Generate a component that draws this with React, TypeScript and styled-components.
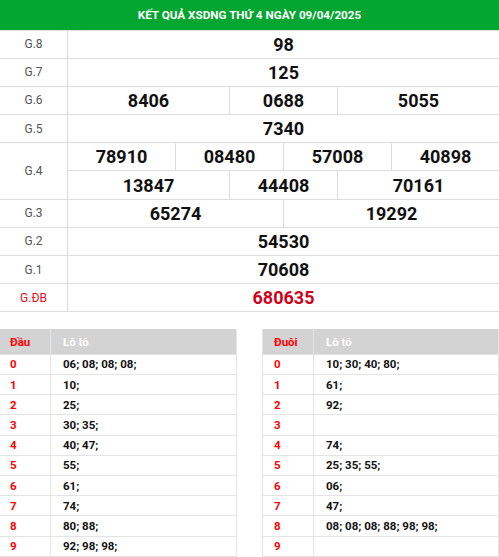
import React from "react";
import styled, { createGlobalStyle } from "styled-components";

const Global = createGlobalStyle`
  html, body { margin: 0; padding: 0; background: #fff; }
  body { font-family: Roboto, "Liberation Sans", Arial, sans-serif; }
`;

const Page = styled.div`
  width: 499px;
`;

const ResultGrid = styled.div`
  display: grid;
  grid-template-columns: 67px repeat(8, 1fr);
  grid-template-rows: 29.5px;
  grid-auto-rows: 27.2px;
  gap: 1px;
  background: #dddddd;
  padding-bottom: 1px;
`;

const Title = styled.div`
  grid-column: 1 / -1;
  background: #03a630;
  color: #fff;
  font-weight: 700;
  font-size: 11.7px;
  display: flex;
  align-items: center;
  justify-content: center;
`;

const Label = styled.div<{ $rows?: number; $red?: boolean }>`
  grid-row: span ${(p) => p.$rows ?? 1};
  background: #fff;
  color: ${(p) => (p.$red ? "#e3101d" : "#555")};
  font-size: 12px;
  display: flex;
  align-items: center;
  justify-content: center;
`;

const Num = styled.div<{ $span: number; $red?: boolean }>`
  grid-column: span ${(p) => p.$span};
  background: #fff;
  color: ${(p) => (p.$red ? "#d0021b" : "#111")};
  font-size: 18px;
  font-weight: 700;
  display: flex;
  align-items: center;
  justify-content: center;
`;

const LotoArea = styled.div`
  display: flex;
  justify-content: space-between;
  margin-top: 17px;
`;

const LotoTable = styled.div<{ $leftBorder?: boolean }>`
  width: 237px;
  display: grid;
  grid-template-columns: 50px 1fr;
  grid-template-rows: 24.5px;
  grid-auto-rows: 19.2px;
  gap: 1px;
  background: #e4e4e4;
  padding: 0 1px 1px ${(p) => (p.$leftBorder ? "1px" : "0")};
  box-sizing: border-box;
`;

const HeadCell = styled.div<{ $red?: boolean; $pad: number }>`
  background: #d3d3d3;
  color: ${(p) => (p.$red ? "#ff0000" : "#fff")};
  font-size: 11.5px;
  font-weight: 700;
  display: flex;
  align-items: center;
  padding-left: ${(p) => p.$pad}px;
`;

const KeyCell = styled.div<{ $pad: number }>`
  background: #fff;
  color: #ff0000;
  font-size: 11.5px;
  font-weight: 700;
  display: flex;
  align-items: center;
  padding-left: ${(p) => p.$pad}px;
`;

const ValCell = styled.div`
  background: #fff;
  color: #111;
  font-size: 11.5px;
  font-weight: 700;
  display: flex;
  align-items: center;
  padding-left: 12px;
`;

type Row = { label: string; red?: boolean; cells: { v: string; span: number }[][] };

const rows: Row[] = [
  { label: "G.8", cells: [[{ v: "98", span: 8 }]] },
  { label: "G.7", cells: [[{ v: "125", span: 8 }]] },
  { label: "G.6", cells: [[{ v: "8406", span: 3 }, { v: "0688", span: 2 }, { v: "5055", span: 3 }]] },
  { label: "G.5", cells: [[{ v: "7340", span: 8 }]] },
  {
    label: "G.4",
    cells: [
      [{ v: "78910", span: 2 }, { v: "08480", span: 2 }, { v: "57008", span: 2 }, { v: "40898", span: 2 }],
      [{ v: "13847", span: 3 }, { v: "44408", span: 2 }, { v: "70161", span: 3 }],
    ],
  },
  { label: "G.3", cells: [[{ v: "65274", span: 4 }, { v: "19292", span: 4 }]] },
  { label: "G.2", cells: [[{ v: "54530", span: 8 }]] },
  { label: "G.1", cells: [[{ v: "70608", span: 8 }]] },
  { label: "G.ĐB", red: true, cells: [[{ v: "680635", span: 8 }]] },
];

const dau = ["06; 08; 08; 08;", "10;", "25;", "30; 35;", "40; 47;", "55;", "61;", "74;", "80; 88;", "92; 98; 98;"];
const duoi = ["10; 30; 40; 80;", "61;", "92;", "", "74;", "25; 35; 55;", "06;", "47;", "08; 08; 08; 88; 98; 98;", ""];

function Loto({ title, data, leftBorder, pad }: { title: string; data: string[]; leftBorder?: boolean; pad: number }) {
  return (
    <LotoTable $leftBorder={leftBorder}>
      <HeadCell $red $pad={pad}>{title}</HeadCell>
      <HeadCell $pad={12}>Lô tô</HeadCell>
      {data.map((d, i) => (
        <React.Fragment key={i}>
          <KeyCell $pad={pad}>{i}</KeyCell>
          <ValCell>{d}</ValCell>
        </React.Fragment>
      ))}
    </LotoTable>
  );
}

export default function App() {
  return (
    <Page>
      <Global />
      <ResultGrid>
        <Title>KẾT QUẢ XSDNG THỨ 4 NGÀY 09/04/2025</Title>
        {rows.map((r) => (
          <React.Fragment key={r.label}>
            <Label $rows={r.cells.length} $red={r.red}>{r.label}</Label>
            {r.cells.flat().map((c, i) => (
              <Num key={i} $span={c.span} $red={r.red}>{c.v}</Num>
            ))}
          </React.Fragment>
        ))}
      </ResultGrid>
      <LotoArea>
        <Loto title="Đầu" data={dau} pad={10} />
        <Loto title="Đuôi" data={duoi} leftBorder pad={11} />
      </LotoArea>
    </Page>
  );
}
